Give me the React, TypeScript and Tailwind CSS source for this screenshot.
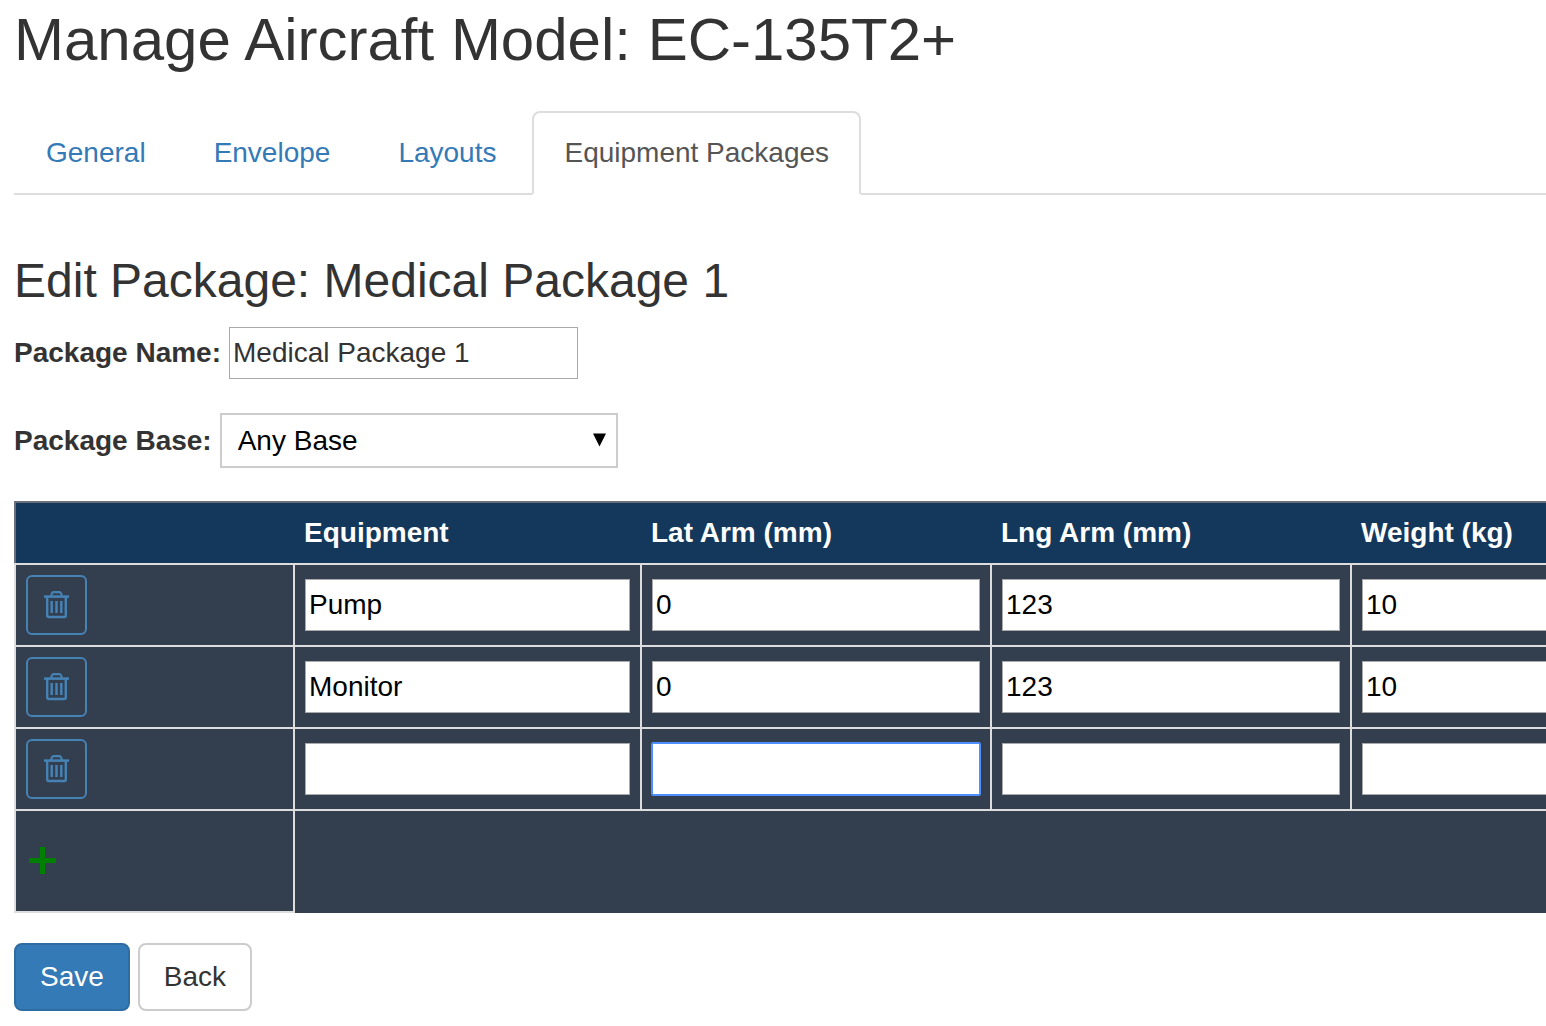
import { useState } from "react";

type Row = { equipment: string; lat: string; lng: string; weight: string };
type Field = keyof Row;

const tabs = ["General", "Envelope", "Layouts", "Equipment Packages"];

const columns: { key: Field; label: string }[] = [
  { key: "equipment", label: "Equipment" },
  { key: "lat", label: "Lat Arm (mm)" },
  { key: "lng", label: "Lng Arm (mm)" },
  { key: "weight", label: "Weight (kg)" },
];

const emptyRow: Row = { equipment: "", lat: "", lng: "", weight: "" };

const initialRows: Row[] = [
  { equipment: "Pump", lat: "0", lng: "123", weight: "10" },
  { equipment: "Monitor", lat: "0", lng: "123", weight: "10" },
  emptyRow,
];

function TrashIcon() {
  return (
    <svg width="25" height="28" viewBox="0 0 25 28" fill="none" stroke="currentColor" strokeWidth="2.2" aria-hidden="true">
      <path d="M0 5.6H25" strokeWidth="2.6" />
      <path d="M7 5L8 2.2Q8.5 1.2 9.5 1.2H15.5Q16.5 1.2 17 2.2L18 5" />
      <path d="M3.2 5.5V24.5Q3.2 26 4.7 26H20.3Q21.8 26 21.8 24.5V5.5" strokeWidth="2.4" />
      <path d="M7.7 10V22M12.5 10V22M17.3 10V22" strokeWidth="2.5" />
    </svg>
  );
}

function PlusIcon() {
  return (
    <svg width="32" height="32" viewBox="0 0 32 32" fill="none" stroke="currentColor" strokeWidth="5" aria-hidden="true">
      <path d="M3 15.5H30M16.5 2V29" />
    </svg>
  );
}

export default function App() {
  const [name, setName] = useState("Medical Package 1");
  const [rows, setRows] = useState<Row[]>(initialRows);
  const [active, setActive] = useState("2-lat");

  const update = (index: number, key: Field, value: string) =>
    setRows(rows.map((row, i) => (i === index ? { ...row, [key]: value } : row)));

  return (
    <main className="overflow-hidden bg-white pt-[7px] pb-4 pl-3.5 font-['Liberation_Sans',Arial,sans-serif] text-[28px] leading-10 text-[#333333]">
      <h1 className="text-[60px] leading-[66px]">Manage Aircraft Model: EC-135T2+</h1>

      <nav className="mt-[38px]">
        <ul className="flex border-b-2 border-[#dddddd]">
          {tabs.map((tab) => (
            <li key={tab} className="-mb-0.5 mr-1">
              <a
                href="#"
                className={
                  tab === "Equipment Packages"
                    ? "block rounded-t-lg border-2 border-[#dddddd] border-b-white bg-white px-[30px] py-5 text-[#555555]"
                    : "block rounded-t-lg border-2 border-transparent px-[30px] py-5 text-[#337ab7]"
                }
              >
                {tab}
              </a>
            </li>
          ))}
        </ul>
      </nav>

      <h2 className="mt-[60px] text-[48px] leading-[52px]">Edit Package: Medical Package 1</h2>

      <div className="mt-5 flex items-center gap-2">
        <label htmlFor="package-name" className="font-bold">Package Name:</label>
        <input
          id="package-name"
          value={name}
          onChange={(e) => setName(e.target.value)}
          className="h-[52px] w-[349px] border border-[#a9a9a9] px-[3px] outline-none"
        />
      </div>

      <div className="mt-[34px] flex items-center gap-2">
        <label htmlFor="package-base" className="font-bold">Package Base:</label>
        <div className="relative">
          <select
            id="package-base"
            className="block h-[55px] w-[398px] appearance-none border-2 border-[#cccccc] bg-white px-4 text-black outline-none"
          >
            <option>Any Base</option>
          </select>
          <svg className="pointer-events-none absolute top-5 right-3" width="13" height="14" viewBox="0 0 13 14" aria-hidden="true">
            <path d="M0 0.5H13L6.5 13.5Z" fill="#000" />
          </svg>
        </div>
      </div>

      <div className="mt-[33px] overflow-hidden">
        <table className="w-[1696px] table-fixed border-separate border-spacing-0 bg-[#333e4f]">
          <colgroup>
            <col className="w-[279px]" />
            <col className="w-[347px]" />
            <col className="w-[350px]" />
            <col className="w-[360px]" />
            <col className="w-[360px]" />
          </colgroup>
          <thead>
            <tr className="h-[62px] bg-[#13385b] text-left text-white">
              <td className="border-t-2 border-l-2 border-[#6a6f7a]" />
              {columns.map((column) => (
                <th key={column.key} scope="col" className="border-t-2 border-[#6a6f7a] px-[11px] py-2.5 font-bold">
                  {column.label}
                </th>
              ))}
            </tr>
          </thead>
          <tbody>
            {rows.map((row, index) => (
              <tr key={index}>
                <td className="border-t-2 border-l-2 border-[#dddddd] p-2.5">
                  <button
                    type="button"
                    aria-label={`Delete row ${index + 1}`}
                    onClick={() => setRows(rows.filter((_, i) => i !== index))}
                    className="flex h-[60px] w-[61px] items-center justify-center rounded-md border-2 border-[#4682b4] text-[#4682b4]"
                  >
                    <TrashIcon />
                  </button>
                </td>
                {columns.map((column) => (
                  <td key={column.key} className="border-t-2 border-l-2 border-[#dddddd] px-2.5">
                    <input
                      aria-label={`${column.label}, row ${index + 1}`}
                      value={row[column.key]}
                      onFocus={() => setActive(`${index}-${column.key}`)}
                      onChange={(e) => update(index, column.key, e.target.value)}
                      className={
                        active === `${index}-${column.key}`
                          ? "block h-[52px] w-full rounded-[1px] border border-[#4d90fe] bg-white px-[3px] text-black outline-1 outline-[#4d90fe]"
                          : "block h-[52px] w-full border border-[#a9a9a9] bg-white px-[3px] text-black outline-none"
                      }
                    />
                  </td>
                ))}
              </tr>
            ))}
            <tr className="h-[104px]">
              <td className="border-y-2 border-l-2 border-[#dddddd] px-2.5">
                <button
                  type="button"
                  aria-label="Add row"
                  onClick={() => setRows([...rows, emptyRow])}
                  className="block text-[#008000]"
                >
                  <PlusIcon />
                </button>
              </td>
              <td colSpan={4} className="border-t-2 border-l-2 border-[#dddddd]" />
            </tr>
          </tbody>
        </table>
      </div>

      <div className="mt-[30px] flex gap-2">
        <button type="button" className="rounded-lg border-2 border-[#2e6da4] bg-[#337ab7] px-6 py-3 text-white">Save</button>
        <button type="button" className="rounded-lg border-2 border-[#cccccc] bg-white px-6 py-3">Back</button>
      </div>
    </main>
  );
}
